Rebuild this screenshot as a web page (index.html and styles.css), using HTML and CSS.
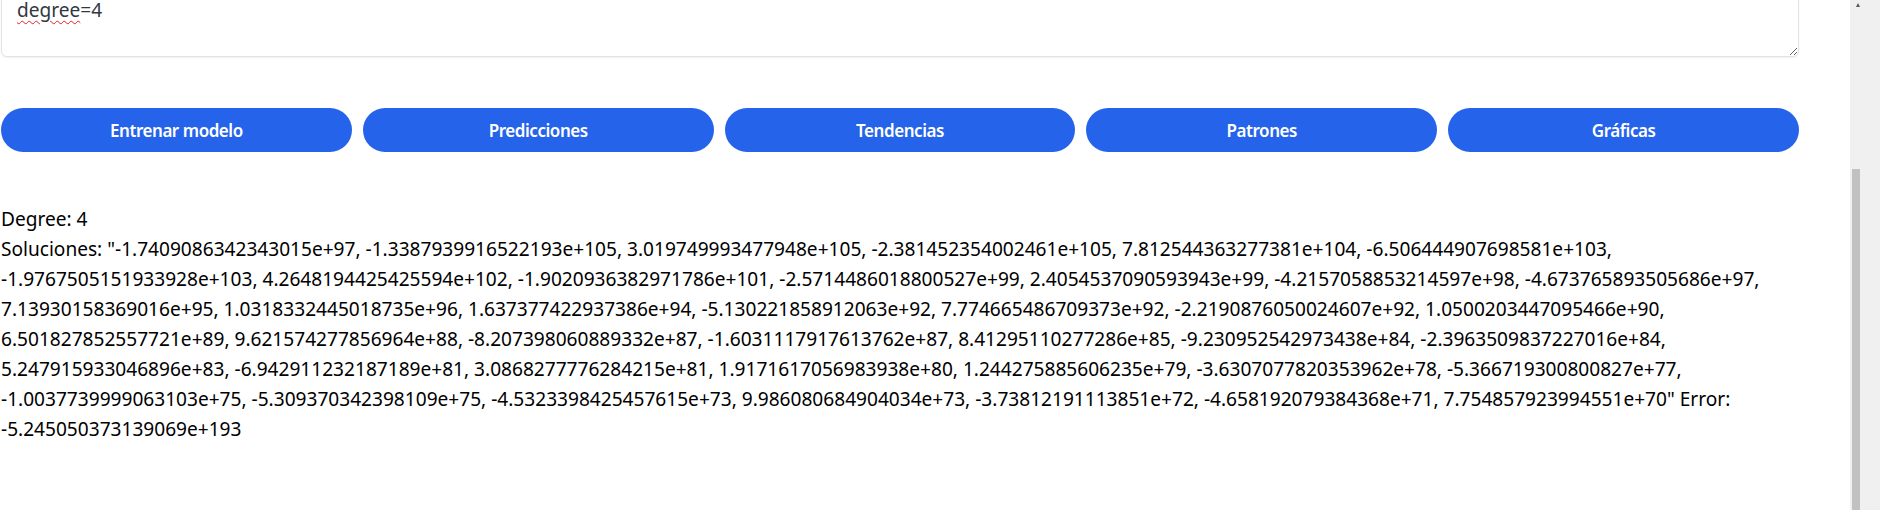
FILE: index.html
```html
<!DOCTYPE html>
<html lang="es">
<head>
<meta charset="utf-8">
<title>Modelo polinomial</title>
<link rel="stylesheet" href="styles.css">
</head>
<body>
<main class="page">
  <div class="params" spellcheck="true"><span class="misspelled">degree</span>=4</div>
  <div class="actions">
    <button class="btn" type="button">Entrenar modelo</button>
    <button class="btn" type="button">Predicciones</button>
    <button class="btn" type="button">Tendencias</button>
    <button class="btn" type="button">Patrones</button>
    <button class="btn" type="button">Gráficas</button>
  </div>
  <section class="results">
    <div class="result-line">Degree: 4</div>
    <div class="result-line">Soluciones: "-1.7409086342343015e+97, -1.3387939916522193e+105, 3.019749993477948e+105, -2.381452354002461e+105, 7.812544363277381e+104, -6.506444907698581e+103, -1.9767505151933928e+103, 4.2648194425425594e+102, -1.9020936382971786e+101, -2.5714486018800527e+99, 2.4054537090593943e+99, -4.2157058853214597e+98, -4.673765893505686e+97, 7.13930158369016e+95, 1.0318332445018735e+96, 1.637377422937386e+94, -5.130221858912063e+92, 7.774665486709373e+92, -2.2190876050024607e+92, 1.0500203447095466e+90, 6.501827852557721e+89, 9.621574277856964e+88, -8.207398060889332e+87, -1.6031117917613762e+87, 8.41295110277286e+85, -9.230952542973438e+84, -2.3963509837227016e+84, 5.247915933046896e+83, -6.942911232187189e+81, 3.0868277776284215e+81, 1.9171617056983938e+80, 1.244275885606235e+79, -3.6307077820353962e+78, -5.366719300800827e+77, -1.0037739999063103e+75, -5.309370342398109e+75, -4.5323398425457615e+73, 9.986080684904034e+73, -3.73812191113851e+72, -4.658192079384368e+71, 7.754857923994551e+70" Error: -5.245050373139069e+193</div>
  </section>
</main>
<aside class="scrollbar" aria-hidden="true">
  <span class="scroll-arrow"></span>
  <span class="scroll-thumb"></span>
</aside>
</body>
</html>
```

FILE: styles.css
```css
html, body {
  margin: 0;
  padding: 0;
  background: #ffffff;
}

body {
  font-family: "Noto Sans", "Open Sans", sans-serif;
  font-size: 19.1px;
  color: #000000;
  overflow: hidden;
}

.page {
  width: 1798px;
  margin: -20px 0 0 1px;
  display: flex;
  flex-direction: column;
}

.params {
  box-sizing: border-box;
  height: 77px;
  padding: 16px 15px;
  border: 1px solid #e3e3e3;
  border-radius: 6px;
  box-shadow: 0 1px 2px rgba(0, 0, 0, 0.06);
  color: #33373f;
  line-height: 26px;
  overflow: auto;
  resize: vertical;
}

.misspelled {
  text-decoration: underline wavy #e8202a;
  text-decoration-thickness: 1px;
  text-underline-offset: 3px;
}

.actions {
  display: flex;
  gap: 11px;
  margin-top: 51px;
}

.btn {
  flex: 1 1 0;
  height: 44px;
  border: none;
  border-radius: 22px;
  background: #2563eb;
  color: #ffffff;
  font-family: "Noto Sans", "Open Sans", sans-serif;
  font-size: 17px;
  font-weight: 600;
  letter-spacing: -0.45px;
  padding: 0;
}

.results {
  margin-top: 52px;
  line-height: 30px;
}

.scrollbar {
  position: fixed;
  top: 0;
  right: 0;
  width: 30px;
  height: 100%;
  background: #f0f0f0;
}

.scroll-arrow {
  position: absolute;
  top: 3px;
  left: 6px;
  width: 0;
  height: 0;
  border-left: 2px solid transparent;
  border-right: 2px solid transparent;
  border-bottom: 4px solid #5a5a5a;
}

.scroll-thumb {
  position: absolute;
  top: 169px;
  bottom: 0;
  left: 2px;
  width: 8px;
  background: #c1c1c1;
}
```
